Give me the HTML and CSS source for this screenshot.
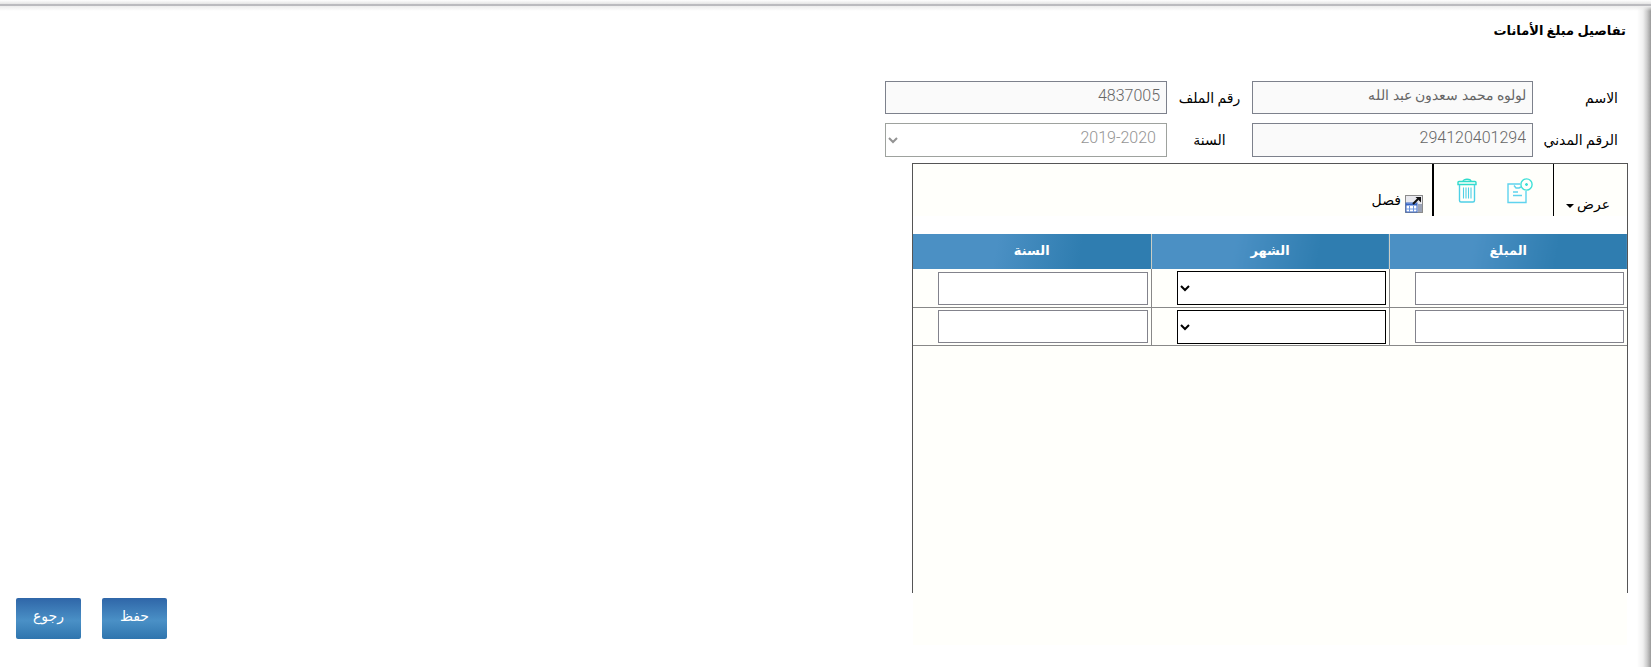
FILE: index.html
```html
<!DOCTYPE html>
<html lang="ar" dir="rtl">
<head>
    <meta charset="utf-8">
    <title>تفاصيل مبلغ الأمانات</title>
    <link rel="stylesheet" href="styles.css">
</head>
<body>

<main class="page">
    <h1>تفاصيل مبلغ الأمانات</h1>

    <form class="details">
        <label for="name">الاسم</label>
        <input id="name" class="name" type="text" value="لولوه محمد سعدون عبد الله" disabled>
        <label class="center" for="file-no">رقم الملف</label>
        <input id="file-no" type="text" value="4837005" disabled>

        <label for="civil-no">الرقم المدني</label>
        <input id="civil-no" type="text" value="294120401294" disabled>
        <label class="center" for="year">السنة</label>
        <select id="year" disabled>
            <option>2019-2020</option>
        </select>
    </form>

    <div class="content">
        <section class="grid">
            <div class="panel">
                <div class="toolbar">
                    <div class="group view">
                        <button type="button" class="text-btn">عرض<span class="caret"></span></button>
                    </div>
                    <div class="group icons">
                        <button type="button" class="icon-btn" aria-label="إضافة">
                            <svg width="26" height="26" viewBox="0 0 26 26" fill="none" stroke="#5fd3ee" stroke-width="1.4">
                                <path d="M13 6H1v18.500h18V13"/>
                                <circle cx="19.500" cy="6.500" r="5.600" stroke="#3fe0d8"/>
                                <path d="M19.500 5v3M18 6.500h3" stroke="#3fe0d8"/>
                                <path d="M7 7.500l2 2.500h3l2-1M6 14h5M6 17.500h9"/>
                            </svg>
                        </button>
                        <button type="button" class="icon-btn" aria-label="حذف">
                            <svg width="20" height="26" viewBox="0 0 20 26" fill="none" stroke="#4fd0e6" stroke-width="1.400">
                                <path d="M1 6.500V4.500q0-1 1-1h16q1 0 1 1v2z" stroke="#2fdccb"/>
                                <path d="M6 3.500C6 .5 14 .5 14 3.500" stroke="#2fdccb"/>
                                <path d="M2.500 6.500v16q0 1.500 1.500 1.500h12q1.500 0 1.500-1.500v-16"/>
                                <path d="M6.500 9.500v11M9 9.500v11M11.500 9.500v11M14 9.500v11" stroke-width="1.100"/>
                            </svg>
                        </button>
                    </div>
                    <div class="group">
                        <button type="button" class="text-btn detach">
                            <svg width="18" height="18" viewBox="0 0 18 18">
                                <rect x=".5" y=".5" width="17" height="17" fill="#e9e9ee" stroke="#222" stroke-dasharray="1 1"/>
                                <rect x="1" y="8" width="11" height="9" fill="#fff" stroke="#3565c4"/>
                                <path d="M1 9.500h11" stroke="#3565c4" stroke-width="2"/>
                                <path d="M4.500 11v6M8.500 11v6M1 14h11" stroke="#6f97e0"/>
                                <path d="M13 9h4v8h-4z" fill="#9ba3b5"/>
                                <path d="M8 9l5-5" stroke="#111" stroke-width="2"/>
                                <path d="M10.500 2H16v5.500z" fill="#111"/>
                            </svg>
                            <span>فصل</span>
                        </button>
                    </div>
                </div>

                <table>
                    <thead>
                        <tr>
                            <th>المبلغ</th>
                            <th>الشهر</th>
                            <th>السنة</th>
                        </tr>
                    </thead>
                    <tbody>
                        <tr>
                            <td><input type="text" aria-label="المبلغ"></td>
                            <td><select aria-label="الشهر"><option></option></select></td>
                            <td><input type="text" aria-label="السنة"></td>
                        </tr>
                        <tr>
                            <td><input type="text" aria-label="المبلغ"></td>
                            <td><select aria-label="الشهر"><option></option></select></td>
                            <td><input type="text" aria-label="السنة"></td>
                        </tr>
                    </tbody>
                </table>
                <div class="empty"></div>
            </div>
            <div class="status"></div>
        </section>

        <div class="actions">
            <button type="button">حفظ</button>
            <button type="button">رجوع</button>
        </div>
    </div>
</main>

</body>
</html>
```

FILE: styles.css
```css
* {
    box-sizing: border-box;
}

body {
    margin: 0;
    font-family: Roboto, "DejaVu Sans", sans-serif;
    font-size: 14px;
    color: #000;
    background-color: #fff;
}

.page {
    min-height: 100vh;
    padding: 20px 23px 22px 16px;
    background:
        linear-gradient(to bottom, #fff, #e4e4e4 4px, #bbbbbf 4px, #bbbbbf 6px, #ececec 6px, rgba(255, 255, 255, 0) 11px) top / 100% 11px no-repeat,
        linear-gradient(to left, #999, #ccc 4px, #f0f0f0 8px, #fff 14px) right / 14px 100% no-repeat;
}

h1 {
    margin: 0 2px 39px 0;
    font-size: 13px;
    line-height: 22px;
}

button,
input,
select {
    font-family: inherit;
    font-size: 16px;
    border-radius: 0;
}

/* file details */
.details {
    display: grid;
    grid-template-columns: 95px 281px 85px 282px;
    grid-template-rows: 33px 34px;
    row-gap: 9px;
    margin-bottom: 6px;
}

.details label {
    padding-right: 10px;
    line-height: 34px;
    white-space: nowrap;
}

.details .center {
    padding: 0;
    text-align: center;
}

.details input {
    padding: 0 6px 5px;
    border: 1px solid #7d818c;
    background-color: #fafafa;
    color: #666;
    font-weight: 300;
}

.details .name {
    font-size: 14px;
}

.details select {
    padding: 0 6px 5px 2px;
    border: 1px solid #767c76;
    background-color: #fff;
    color: #666;
    font-weight: 300;
}

/* amounts grid */
.content {
    display: flex;
    justify-content: space-between;
    align-items: flex-end;
}

.grid {
    flex: 0 1 716px;
}

.panel {
    border: 1px solid #555;
    border-bottom: 0;
}

.toolbar {
    display: flex;
    height: 52px;
    margin-bottom: 18px;
    background-color: #fffffb;
}

.group {
    display: flex;
    align-items: flex-end;
}

.view {
    width: 74px;
    padding-right: 17px;
    border-left: 1px solid #000;
}

.icons {
    width: 121px;
    padding: 14px 20px 0 0;
    gap: 30px;
    align-items: flex-start;
    border-left: 2px solid #000;
}

.text-btn,
.icon-btn {
    display: flex;
    padding: 0;
    border: 0;
    background: none;
    color: #000;
}

.text-btn {
    align-items: center;
    gap: 3px;
    font-size: 14px;
    line-height: 24px;
}

.caret {
    margin-top: 4px;
    border: 4px solid transparent;
    border-top-color: #000;
    border-bottom: 0;
}

.detach {
    padding: 0 9px 3px 0;
    gap: 4px;
    align-items: flex-end;
}

.detach span {
    padding-bottom: 1px;
}

table {
    width: 100%;
    border-collapse: collapse;
    table-layout: fixed;
}

th {
    height: 35px;
    padding: 0 0 3px;
    border-left: 1px solid #c9cdc5;
    background: linear-gradient(100deg, #4b90c4, #4b90c4 35%, #2f7db0 70%, #2f7db0);
    color: #fff;
    font-size: 13px;
}

td {
    height: 38px;
    padding: 1px 3px 0 1px;
    border-left: 1px solid #888;
    border-bottom: 1px solid #888;
    background-color: #fffffb;
}

th:last-child,
td:last-child {
    border-left: 0;
}

td input,
td select {
    display: block;
    width: calc(100% - 24px);
    height: 33px;
    border: 1px solid #83838c;
    background-color: #fff;
}

td select {
    height: 34px;
    padding-left: 2px;
    border-color: #000;
}

.empty {
    height: 247px;
    background-color: #fffffb;
}

.status {
    height: 52px;
    margin: 0 1px;
    background-color: #fffffb;
}

/* page buttons */
.actions {
    display: flex;
    gap: 21px;
    padding-bottom: 6px;
}

.actions button {
    width: 65px;
    height: 41px;
    padding: 0 0 4px;
    border: 0;
    border-radius: 2px;
    background: linear-gradient(to bottom, #2f66a8, #4a90c6 55%, #2f75ae);
    color: #fff;
    font-size: 14px;
}
```
